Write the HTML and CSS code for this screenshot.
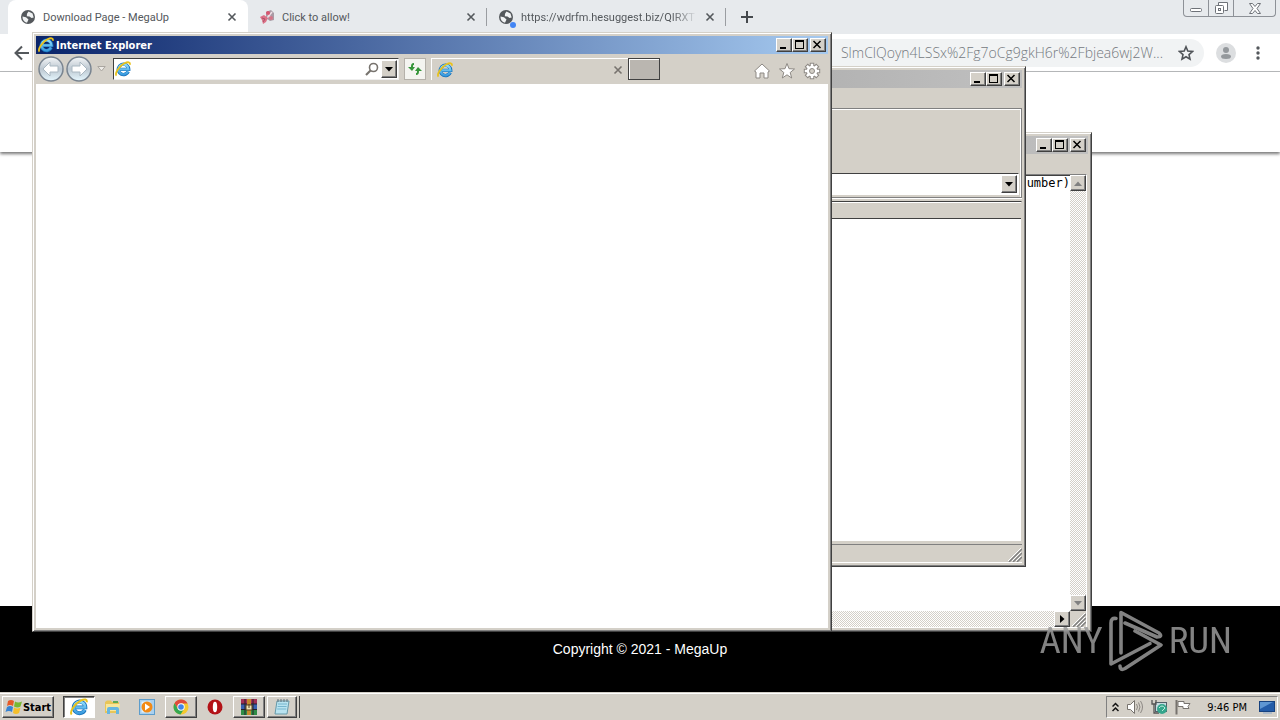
FILE: index.html
```html
<!DOCTYPE html>
<html lang="en">
<head>
<meta charset="utf-8">
<title>Download Page - MegaUp</title>
<link rel="stylesheet" href="styles.css">
</head>
<body>
<svg class="defs" aria-hidden="true">
  <defs>
    <linearGradient id="ie-blue" x1="0" y1="0" x2="0" y2="1">
      <stop offset="0" stop-color="#8fdcfb"/><stop offset="1" stop-color="#3a9ce0"/>
    </linearGradient>
    <linearGradient id="orb" x1="0" y1="0" x2="0" y2="1">
      <stop offset="0" stop-color="#f4f6f8"/><stop offset=".5" stop-color="#bcc7d0"/><stop offset="1" stop-color="#e6f8ff"/>
    </linearGradient>
    <symbol id="ie" viewBox="0 0 16 16">
      <path d="M13.2 10.6A5.2 5.2 0 1 1 13.7 8.4H5" fill="none" stroke="#1670b8" stroke-width="3.4"/>
      <path d="M13 10.6A5 5 0 1 1 13.5 8.4H5" fill="none" stroke="url(#ie-blue)" stroke-width="2.3"/>
      <path d="M1.5 14.6C-.6 12.5 4 5 9.500 2.300C13 .5 15.500 1 14.800 3.800" fill="none" stroke="#e9c21c" stroke-width="1.800"/>
    </symbol>
    <symbol id="globe" viewBox="0 0 16 16">
      <circle cx="8" cy="8" r="7" fill="#54585c"/>
      <path d="M2.500 7.500L6 8.200L8.500 10.500L7 13.800C4 13.200 2.300 10.600 2.500 7.500ZM8.500 2.500L12.500 4.500L13.700 8.500L11.500 9L9.500 7.500L6.800 7.200L7 4.800Z" fill="#f0f2f3"/>
    </symbol>
    <symbol id="close" viewBox="0 0 10 10">
      <path d="M1.500 1.500l7 7M8.500 1.500l-7 7" fill="none" stroke="currentColor" stroke-width="1.600"/>
    </symbol>
    <symbol id="w-min" viewBox="0 0 12 10"><path d="M2 7h6v2H2z"/></symbol>
    <symbol id="w-max" viewBox="0 0 12 10"><path d="M1 0h9v9H1zM2 2v6h7V2z" fill-rule="evenodd"/></symbol>
    <symbol id="w-close" viewBox="0 0 12 10"><path d="M1.500 1l7 7M8.500 1l-7 7" fill="none" stroke="#000" stroke-width="1.500"/></symbol>
    <symbol id="down" viewBox="0 0 8 5"><path d="M0 0h8L4 4.500z"/></symbol>
    <symbol id="grip" viewBox="0 0 14 14"><path d="M1 14L14 1M5 14l9-9M9 14l5-5" stroke="#808080" stroke-width="1.500"/><path d="M0 13L13 0M4 13l9-9M8 13l5-5" stroke="#fff"/></symbol>
  </defs>
</svg>

<main class="desktop">
  <section class="chrome" aria-label="Browser">
    <div class="tabstrip">
      <div class="tab tab-active"><svg class="i16"><use href="#globe"/></svg><span class="tab-title">Download Page - MegaUp</span><button class="tab-x" aria-label="Close tab"><svg><use href="#close"/></svg></button></div>
      <div class="tab"><svg class="i16" viewBox="0 0 16 16"><path d="M7 3l5-2 3 3v7l-4 1-4-3z" fill="#a99ba5"/><path d="M8 4l5 6M13 3L8 9" stroke="#f0dfe5" stroke-width="1.500"/><circle cx="9" cy="4" r="2" fill="#d75670"/><circle cx="12" cy="9" r="2" fill="#d27588"/><path d="M1 8l4-2 4 3-2 4-3 2-1-4z" fill="#dc7187"/><path d="M3 9l3 1-2 3" stroke="#aa5268" fill="none"/></svg><span class="tab-title">Click to allow!</span><button class="tab-x" aria-label="Close tab"><svg><use href="#close"/></svg></button></div>
      <div class="tab"><span class="fav"><svg class="i16"><use href="#globe"/></svg><i class="dot"></i></span><span class="tab-title fade">https://wdrfm.hesuggest.biz/QIRXT</span><button class="tab-x" aria-label="Close tab"><svg><use href="#close"/></svg></button></div>
      <button class="new-tab" aria-label="New tab"><svg viewBox="0 0 12 12"><path d="M6 0v12M0 6h12" stroke="#45494d" stroke-width="2"/></svg></button>
      <div class="frame-controls">
        <button aria-label="Minimize"><svg width="12" height="10" viewBox="0 0 12 10"><rect x=".5" y="5.500" width="11" height="3" rx="1" fill="#fff" stroke="#6e7278"/></svg></button>
        <button aria-label="Restore"><svg width="14" height="13" viewBox="0 0 14 13"><path d="M4.500 3.500v-3h9v8h-3" fill="#fff" stroke="#6e7278"/><rect x="1.500" y="3.500" width="8" height="8" rx="1" fill="#fff" stroke="#6e7278"/><rect x="4.500" y="6.500" width="2" height="2" fill="none" stroke="#6e7278"/></svg></button>
        <button aria-label="Close"><svg width="12" height="11" viewBox="0 0 12 11"><path d="M.5 .5h3L6 3.500 8.500.5h3L8 5.500l3.500 5h-3L6 7.500l-2.500 3h-3l3.500-5z" fill="#fff" stroke="#6e7278"/></svg></button>
      </div>
    </div>
    <div class="chrome-bar">
      <button class="back" aria-label="Back"><svg viewBox="0 0 16 16"><path d="M15 8H2M8 1.500L1.500 8 8 14.500" fill="none" stroke="#54585c" stroke-width="2"/></svg></button>
      <div class="omnibox"><a class="url" href="#page">SlmClQoyn4LSSx%2Fg7oCg9gkH6r%2Fbjea6wj2W...</a><button aria-label="Bookmark"><svg width="16" height="16" viewBox="0 0 16 16"><path d="M8 1.800l1.800 4.300 4.700.4-3.500 3.100 1 4.600-4-2.400-4 2.400 1-4.600L1.500 6.500l4.700-.4z" fill="none" stroke="#505458" stroke-width="1.600"/></svg></button></div>
      <button class="avatar" aria-label="Profile"><svg width="20" height="20" viewBox="0 0 20 20"><circle cx="10" cy="10" r="10" fill="#dcdee0"/><circle cx="10" cy="7" r="3" fill="#94989c"/><ellipse cx="10" cy="13.500" rx="5" ry="2.500" fill="#94989c"/></svg></button>
      <button class="kebab" aria-label="Menu"><svg width="4" height="14" viewBox="0 0 4 14"><g fill="#54585c"><circle cx="2" cy="2" r="1.700"/><circle cx="2" cy="7" r="1.700"/><circle cx="2" cy="12" r="1.700"/></g></svg></button>
    </div>
    <div class="page" id="page">
      <header class="site-header"></header>
      <div class="site-body"></div>
      <footer class="site-footer">Copyright © 2021 - MegaUp</footer>
    </div>
  </section>

  <section class="window notepad" aria-label="Text editor">
    <div class="titlebar inactive"><div class="win-buttons"><button aria-label="Minimize"><svg><use href="#w-min"/></svg></button><button aria-label="Maximize"><svg><use href="#w-max"/></svg></button><button aria-label="Close"><svg><use href="#w-close"/></svg></button></div></div>
    <div class="menubar"></div>
    <div class="editor">
      <div class="doc">umber)</div>
      <div class="vscroll"><button class="raised" aria-label="Scroll up"><svg class="up"><use href="#down"/></svg></button><button class="raised" aria-label="Scroll down"><svg><use href="#down"/></svg></button></div>
      <div class="hscroll"><button class="raised" aria-label="Scroll right"><svg class="right" viewBox="0 0 5 8"><path d="M0 0v8l4.500-4z"/></svg></button></div>
      <svg class="corner"><use href="#grip"/></svg>
    </div>
  </section>

  <section class="window archive" aria-label="Archive manager">
    <div class="titlebar inactive"><div class="win-buttons"><button aria-label="Minimize"><svg><use href="#w-min"/></svg></button><button aria-label="Maximize"><svg><use href="#w-max"/></svg></button><button aria-label="Close"><svg><use href="#w-close"/></svg></button></div></div>
    <div class="menubar"></div>
    <div class="tools">
      <div class="combo"><input aria-label="Path"><button class="raised" aria-label="Show list"><svg><use href="#down"/></svg></button></div>
    </div>
    <div class="list"><div class="list-head"></div></div>
    <div class="status"><svg><use href="#grip"/></svg></div>
  </section>

  <section class="window ie" aria-label="Internet Explorer">
    <div class="titlebar"><svg class="i16"><use href="#ie"/></svg><h1>Internet Explorer</h1><div class="win-buttons"><button aria-label="Minimize"><svg><use href="#w-min"/></svg></button><button aria-label="Maximize"><svg><use href="#w-max"/></svg></button><button aria-label="Close"><svg><use href="#w-close"/></svg></button></div></div>
    <div class="ie-bar">
      <div class="orbs">
        <button aria-label="Back"><svg viewBox="0 0 26 26"><circle cx="13" cy="13" r="12" fill="url(#orb)" stroke="#798490" stroke-width="1.500"/><path d="M5 13l7-7v4h8v6h-8v4z" fill="#fff" stroke="#aab8c2"/></svg></button>
        <button aria-label="Forward"><svg viewBox="0 0 26 26"><circle cx="13" cy="13" r="12" fill="url(#orb)" stroke="#798490" stroke-width="1.500"/><path d="M21 13l-7-7v4H6v6h8v4z" fill="#fff" stroke="#aab8c2"/></svg></button>
      </div>
      <button class="recent" aria-label="Recent pages"><svg width="9" height="6" viewBox="0 0 9 6"><path d="M.8.5h7.400L4.500 5z" fill="#eeece8" stroke="#aaa6a0"/></svg></button>
      <div class="address"><svg class="i16"><use href="#ie"/></svg><input aria-label="Address"><button aria-label="Search"><svg width="14" height="14" viewBox="0 0 14 14"><circle cx="8.500" cy="5.500" r="4" fill="none" stroke="#77736e" stroke-width="1.600"/><path d="M5.500 8.500L1 13" stroke="#77736e" stroke-width="2.200"/></svg></button><button class="raised" aria-label="Address list"><svg width="8" height="5"><use href="#down"/></svg></button></div>
      <button class="refresh" aria-label="Refresh"><svg width="16" height="16" viewBox="0 0 16 16"><path d="M7 2C4.500 2 4 3.500 4 6H1l4 4 3-4H6C6 4.500 6 4 7 4zM9 14c2.500 0 3-1.500 3-4h3l-4-4-3 4h2c0 1.500 0 2-1 2z" fill="#36953a"/></svg></button>
      <div class="ie-tab"><svg class="i16"><use href="#ie"/></svg><button aria-label="Close tab"><svg width="10" height="10"><use href="#close"/></svg></button></div>
      <button class="ie-new" aria-label="New tab"></button>
      <div class="ie-tools">
        <button aria-label="Home"><svg viewBox="0 0 18 18"><path d="M9 2l7.500 7-1.500 1v6h-4v-5H7v5H3v-6L1.500 9z" fill="#fff" stroke="#8d8984"/></svg></button>
        <button aria-label="Favorites"><svg viewBox="0 0 18 18"><path d="M9 1.500l2 5.200 5.500.3-4.300 3.500 1.500 5.500L9 12.800 4.300 16l1.500-5.500L1.500 7 7 6.700z" fill="#fff" stroke="#8d8984"/></svg></button>
        <button aria-label="Tools"><svg viewBox="0 0 18 18"><g stroke="#8d8984" stroke-width="4.500"><path d="M9 .8v16.400M.8 9h16.400M3.200 3.200l11.600 11.600M14.800 3.200L3.200 14.800"/></g><circle cx="9" cy="9" r="6" fill="#8d8984"/><g stroke="#fff" stroke-width="2.500"><path d="M9 1.800v14.400M1.800 9h14.400M3.900 3.900l10.200 10.200M14.100 3.900L3.900 14.100"/></g><circle cx="9" cy="9" r="5.200" fill="#fff"/><circle cx="9" cy="9" r="2.500" fill="#d4d0c8" stroke="#8d8984"/></svg></button>
      </div>
    </div>
    <div class="ie-view"></div>
  </section>

  <div class="watermark">
    <span>ANY</span>
    <svg viewBox="0 0 54 62"><g fill="none" stroke="#999" stroke-width="3.600" stroke-linejoin="round" stroke-linecap="round"><path d="M7 8.500Q2 7.500 2 13V54L41 33.500"/><path d="M12 43V2.500L50 23Q54 27 48 27L16 13"/><path d="M26 21L52 35L16 58.500Q11 61 11 56"/></g></svg>
    <span>RUN</span>
  </div>
</main>

<nav class="taskbar" aria-label="Taskbar">
  <button class="start raised"><svg width="18" height="18" viewBox="0 0 18 18"><path d="M3 3q3-2 6 0L8 8Q5 6 2 8z" fill="#e65a28"/><path d="M10 3.500q3 2 7 0L15.500 8.500q-3 2-6.500 0z" fill="#78b832"/><path d="M2 9q3-2 6 0l-1 5q-3-2-6.500 0z" fill="#3683d4"/><path d="M9 9.500q3 2 6.500 0L14 15q-3 2-6 0z" fill="#f5bf2a"/></svg>Start</button>
  <div class="tasks">
    <button class="pressed" aria-label="Internet Explorer"><svg width="18" height="18"><use href="#ie"/></svg></button>
    <button class="flat" aria-label="Explorer"><svg width="18" height="18" viewBox="0 0 18 18"><path d="M1 4l2-1.500h4L8 4h7v11H1z" fill="#e8c558"/><path d="M2 6h14l-1 7H2z" fill="#f8e69a"/><path d="M3 16v-5q0-2 2-2h8q2 0 2 2v5h-3v-4H6v4z" fill="#67b6e0"/><path d="M9 4h5" stroke="#5fa956" stroke-width="2"/></svg></button>
    <button class="flat" aria-label="Media Player"><svg width="18" height="18" viewBox="0 0 18 18"><rect x="1.500" y="1.500" width="15" height="15" fill="#a9d0ef" stroke="#5d9dcc"/><rect x="3.500" y="3.500" width="9" height="11" fill="#e4f1fb"/><circle cx="9" cy="9" r="5.500" fill="#f28a16"/><path d="M7 5.500l5 3.500-5 3.500z" fill="#fff"/></svg></button>
    <button class="raised" aria-label="Chrome"><svg width="16" height="16" viewBox="0 0 16 16"><circle cx="8" cy="8" r="7.500" fill="#f5c92e"/><path d="M1.500 4.300A7.500 7.500 0 0 1 14.600 4.500H8L5 10z" fill="#df4a3c"/><path d="M1.500 4.300A7.500 7.500 0 0 0 7.500 15.500L11 10H5z" fill="#35a852"/><circle cx="8" cy="8" r="3.700" fill="#fff"/><circle cx="8" cy="8" r="2.800" fill="#4285e8"/></svg></button>
    <button class="flat" aria-label="Opera"><svg width="16" height="16" viewBox="0 0 16 16"><circle cx="8" cy="8" r="7.500" fill="#b31217"/><ellipse cx="8" cy="8" rx="2.200" ry="5.300" fill="#fff"/></svg></button>
    <button class="raised" aria-label="WinRAR"><svg width="18" height="18" viewBox="0 0 18 18"><path d="M1 1h16v5H1z" fill="#a32f55"/><path d="M1 6h16v5H1z" fill="#3860b0"/><path d="M1 12h16v5H1z" fill="#2f8c46"/><path d="M1 6h16M1 11.500h16M5 1v16M13 1v16" stroke="#25202b"/><path d="M7 1h4v16H7z" fill="#c58a2d"/><path d="M6 7h6v5H6z" fill="#eee2b4" stroke="#59411c"/><path d="M9 6v4" stroke="#59411c"/></svg></button>
    <button class="raised stack" aria-label="Notepad"><svg width="18" height="18" viewBox="0 0 18 18"><path d="M4 3h12l-2 13H2z" fill="#b9e3f0" stroke="#6699a9"/><path d="M5 6h9M4.600 8.500h9M4.200 11h9" stroke="#76b5cd"/><path d="M5 1v3M8 1v3M11 1v3M14 1v3" stroke="#60717a"/></svg></button>
  </div>
  <div class="tray">
    <button aria-label="Show hidden icons"><svg width="7" height="10" viewBox="0 0 7 10"><path d="M.5 4.500l3-3 3 3M.5 9l3-3 3 3" fill="none" stroke="#111" stroke-width="1.500"/></svg></button>
    <button aria-label="Volume"><svg width="16" height="16" viewBox="0 0 16 16"><path d="M.5 5.500h3l4-4v13l-4-4h-3z" fill="#fff" stroke="#77736e"/><path d="M9.500 5q2 3 0 6M11.500 3.500q3 4.500 0 9M13.500 2q4 6 0 12" fill="none" stroke="#8d8984"/></svg></button>
    <button aria-label="Network"><svg width="16" height="16" viewBox="0 0 16 16"><rect x="4.500" y="3.500" width="11" height="9" fill="#c5dbe0" stroke="#536069"/><path d="M1 1v4h4V1M3 5v9h5" fill="none" stroke="#555" stroke-width="1.300"/><circle cx="11" cy="10" r="5" fill="#35a58c"/><path d="M8 9q3-4 6 0l-3 3" stroke="#bdebdc" fill="none"/></svg></button>
    <button aria-label="Action Center"><svg width="16" height="16" viewBox="0 0 16 16"><path d="M1.500 1v14.500" stroke="#77736e" stroke-width="2"/><path d="M3 2.500h6v2h6l-2 3 1 2H8v-2H3z" fill="#fff" stroke="#77736e"/></svg></button>
    <time>9:46 PM</time>
    <button aria-label="Show desktop"><svg width="16" height="14" viewBox="0 0 16 14"><rect x=".5" y="1.500" width="15" height="10" fill="#245ca8" stroke="#17427f"/><path d="M1 2h13L1 9z" fill="#5f96d2"/><path d="M4 13h9" stroke="#8ba7ca"/></svg></button>
  </div>
</nav>
</body>
</html>
```
FILE: styles.css
```css
:root {
  --face: #d4d0c8;
  --ui: "DejaVu Sans Condensed", "Noto Sans", sans-serif;
}
* { box-sizing: border-box; }
body {
  margin: 0;
  height: 100vh;
  display: flex;
  flex-direction: column;
  overflow: hidden;
  background: #fff;
  font-family: Roboto, sans-serif;
  font-size: 11px;
  color: #000;
}
button, input { font: inherit; color: inherit; margin: 0; padding: 0; border: 0; background: none; outline: 0; min-width: 0; }
button { display: flex; align-items: center; justify-content: center; flex: none; }
svg { display: block; flex: none; }
.defs { position: absolute; width: 0; height: 0; }
.i16 { width: 16px; height: 16px; }
.raised {
  background: var(--face);
  border: 1px solid;
  border-color: #fff #404040 #404040 #fff;
  box-shadow: inset -1px -1px #808080;
}
.desktop { position: relative; flex: 1; min-height: 0; display: flex; }

/* Browser behind the windows */
.chrome { flex: 1; display: flex; flex-direction: column; min-width: 0; }
.tabstrip { display: flex; height: 34px; padding-left: 8px; background: #e7eaed; }
.tab { display: flex; align-items: center; gap: 7px; width: 239px; padding: 0 10px 0 12px; color: #54585c; border-right: 1px solid transparent; }
.tab:not(.tab-active) { height: 18px; margin-top: 8px; padding-left: 11px; border-color: #9a9da1; }
.tab-active { width: 240px; background: #fff; border-radius: 8px 8px 0 0; }
.tab-title { flex: 1; white-space: nowrap; }
.fade { -webkit-mask-image: linear-gradient(90deg, #000 85%, transparent); mask-image: linear-gradient(90deg, #000 85%, transparent); }
.tab-x svg { width: 10px; height: 10px; }
.fav { position: relative; }
.dot { position: absolute; right: -2px; bottom: -3px; width: 6px; height: 6px; border-radius: 50%; background: #4285f4; }
.new-tab { width: 42px; }
.new-tab svg { width: 12px; height: 12px; }
.frame-controls { display: flex; height: 17px; margin-left: auto; margin-right: 4px; border: 1px solid #8d9197; border-top: 0; border-radius: 0 0 4px 4px; }
.frame-controls button { width: 25px; border-right: 1px solid #8d9197; }
.frame-controls button:last-child { width: 41px; border: 0; }
.chrome-bar { display: flex; align-items: center; height: 38px; padding: 0 13px 0 14px; border-bottom: 1px solid #b8babc; background: #fff; }
.back svg { width: 16px; height: 16px; }
.omnibox { flex: 1; display: flex; align-items: center; justify-content: flex-end; gap: 15px; height: 28px; margin-left: 90px; padding-right: 10px; border-radius: 14px; background: #f1f3f4; }
.url { color: #74797e; font: 300 14px "Open Sans", sans-serif; text-decoration: none; }
.avatar { margin-left: 12px; }
.kebab { width: 18px; margin-left: 13px; }
.page { flex: 1; display: flex; flex-direction: column; background: #fff; }
.site-header { height: 80px; box-shadow: 0 2px 3px #777; }
.site-body { flex: 1; }
.site-footer { height: 86px; background: #000; color: #fff; font: 14px/86px "Liberation Sans", Arial, sans-serif; text-align: center; }

/* Classic window frame */
.window {
  position: absolute;
  display: flex;
  flex-direction: column;
  padding: 3px;
  background: var(--face);
  border: 1px solid;
  border-color: #d4d0c8 #404040 #404040 #d4d0c8;
  box-shadow: inset 1px 1px #fff, inset -1px -1px #808080;
}
.notepad { left: 132px; top: 132px; width: 960px; height: 500px; }
.archive { left: 66px; top: 66px; width: 960px; height: 501px; }
.ie { left: 32px; top: 32px; width: 800px; height: 600px; }
.titlebar { display: flex; align-items: center; gap: 2px; height: 18px; padding: 0 2px; color: #fff; background: linear-gradient(90deg, #0a246a, #a6caf0); }
.titlebar.inactive { background: linear-gradient(90deg, #808080, #c0c0c0); }
.titlebar h1 { margin: 0; font: bold 11px var(--ui); }
.win-buttons { display: flex; margin-left: auto; }
.win-buttons button { width: 16px; height: 14px; color: #000; background: var(--face); border: 1px solid; border-color: #fff #404040 #404040 #fff; box-shadow: inset -1px -1px #808080; }
.win-buttons button:last-child { margin-left: 2px; }
.win-buttons svg { width: 12px; height: 10px; }
.menubar { height: 20px; }

/* Text editor */
.editor { flex: 1; display: grid; grid-template: 1fr 16px / 1fr 16px; margin-right: 1px; border: 1px solid #808080; border-right-color: #fff; border-bottom-color: #fff; background: #fff; }
.doc { border-top: 1px solid #404040; font: 12px/14px "DejaVu Sans Mono", monospace; text-align: right; }
.vscroll, .hscroll { display: flex; justify-content: space-between; background: repeating-conic-gradient(#fff 0 25%, #d4d0c8 0 50%) 0 0 / 2px 2px; }
.vscroll { flex-direction: column; }
.hscroll { justify-content: flex-end; }
.vscroll button, .hscroll button { width: 16px; height: 16px; }
.editor button svg { width: 8px; height: 5px; }
.vscroll svg { fill: #808080; }
.editor .up { transform: rotate(180deg); }
.editor .right { width: 5px; height: 8px; }
.corner { width: 16px; height: 16px; padding: 2px 0 0 2px; background: var(--face); }

/* Archive manager */
.tools { display: flex; flex-direction: column; justify-content: flex-end; height: 90px; padding: 0 2px 2px; border: 1px solid #808080; box-shadow: inset -1px 1px #fff, 0 1px #fff; }
.combo { display: flex; height: 22px; padding: 1px; border: 1px solid #404040; border-right-color: #fff; border-bottom-color: #fff; background: #fff; }
.combo input { flex: 1; }
.combo button { width: 16px; }
.combo svg { width: 8px; height: 5px; }
.list { flex: 1; margin-top: 3px; border: 1px solid #404040; border-right-color: #d4d0c8; border-bottom-color: #d4d0c8; background: #fff; }
.list-head { height: 17px; background: var(--face); border-top: 1px solid #fff; border-bottom: 1px solid #404040; }
.status { display: flex; align-items: flex-end; justify-content: flex-end; height: 19px; margin-top: 2px; border-top: 1px solid #808080; border-bottom: 1px solid #fff; }
.status svg { width: 14px; height: 14px; }

/* Internet Explorer */
.ie-bar { display: flex; align-items: center; height: 30px; }
.orbs { display: flex; gap: 2px; padding-left: 2px; }
.orbs svg { width: 26px; height: 26px; }
.recent { width: 18px; }
.address { display: flex; align-items: center; width: 286px; height: 22px; margin-left: 3px; padding: 1px; background: #fff; border: 1px solid; border-color: #404040 #eee #eee #404040; }
.address input { flex: 1; }
.address button + button { width: 16px; height: 18px; margin-left: 2px; }
.refresh { width: 22px; height: 22px; margin: 0 5px; background: #f4f4f0; border: 1px solid #b5b1aa; }
.ie-tab { display: flex; align-items: center; justify-content: space-between; width: 197px; height: 22px; padding: 0 5px; border: 1px solid #fff; border-right: 0; border-bottom: 0; color: #77736e; }
.ie-new { width: 32px; height: 22px; background: #bab6b0; border: 1px solid #404040; box-shadow: inset 1px 1px #fff; }
.ie-tools { display: flex; gap: 7px; margin-left: auto; padding: 4px 7px 0 0; }
.ie-tools svg { width: 18px; height: 18px; }
.ie-view { flex: 1; background: #fff; }

.watermark { position: absolute; right: 48px; bottom: 20px; display: flex; align-items: center; gap: 6px; color: #999; opacity: .85; font: 37px/62px "Roboto Condensed", "Liberation Sans Narrow", "DejaVu Sans Condensed", sans-serif; }
.watermark svg { width: 54px; height: 62px; }

/* Taskbar */
.taskbar { display: flex; align-items: center; height: 28px; padding: 1px 2px 0; background: var(--face); border-top: 1px solid #d4d0c8; box-shadow: inset 0 1px #fff; font-family: var(--ui); }
.start { width: 52px; height: 22px; font-weight: bold; font-size: 11px; }
.tasks { display: flex; gap: 2px; margin-left: 9px; }
.tasks button { width: 32px; height: 22px; }
.tasks .pressed { background: #fff; border: 1px solid; border-color: #404040 #fff #fff #404040; box-shadow: inset 1px 1px #808080; }
.tasks .stack { width: 30px; box-shadow: inset -1px -1px #808080, 2px 0 var(--face), 3px 0 #404040; }
.tray { display: flex; align-items: center; gap: 8px; height: 22px; margin-left: auto; padding: 0 2px 0 5px; border: 1px solid; border-color: #808080 #fff #fff #808080; }
.tray time { margin: 0 4px 0 8px; }
```
